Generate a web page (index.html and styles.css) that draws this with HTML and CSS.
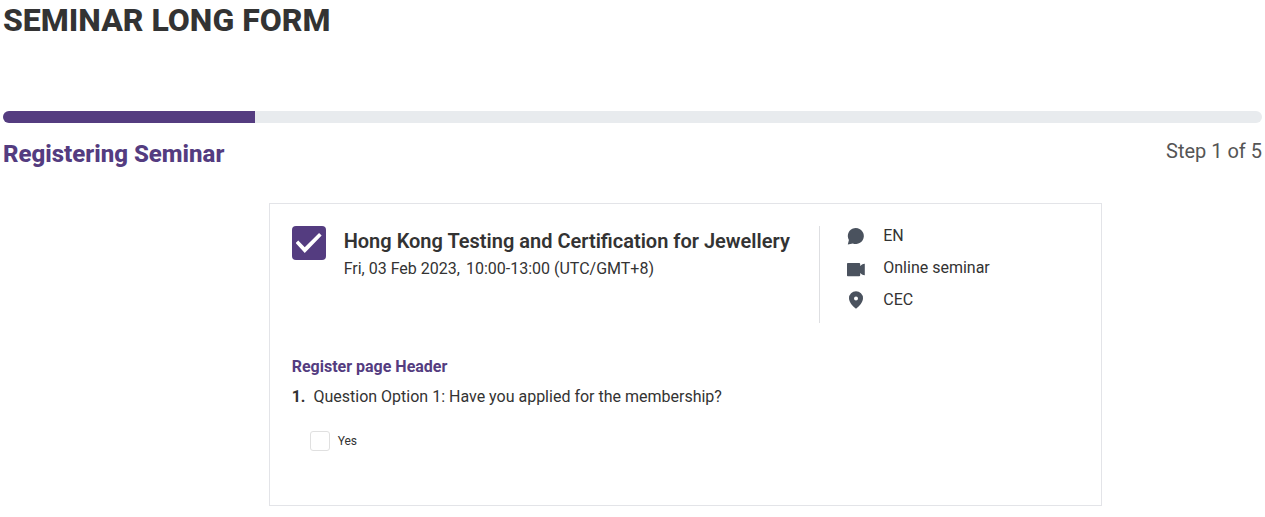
FILE: index.html
```html
<!DOCTYPE html>
<html lang="en">
<head>
<meta charset="utf-8">
<meta name="viewport" content="width=device-width, initial-scale=1">
<title>Seminar Long Form</title>
<link rel="stylesheet" href="styles.css">
</head>
<body>
<main class="page">
  <h1 class="title">SEMINAR LONG FORM</h1>
  <div class="progress" role="progressbar" aria-label="Registration progress" aria-valuemin="0" aria-valuemax="5" aria-valuenow="1">
    <div class="progress-bar" style="width: 20%"></div>
  </div>
  <div class="step-row">
    <h2 class="step-name">Registering Seminar</h2>
    <p class="step-count">Step 1 of 5</p>
  </div>
  <form class="card">
    <div class="seminar">
      <input class="check check-large" type="checkbox" id="seminar" checked>
      <div class="seminar-info">
        <label class="seminar-name" for="seminar">Hong Kong Testing and Certification for Jewellery</label>
        <p class="seminar-time"><span>Fri, 03 Feb 2023,</span><span>10:00-13:00 (UTC/GMT+8)</span></p>
      </div>
      <ul class="details">
        <li class="detail">
          <svg class="icon" viewBox="0 0 18 18" aria-hidden="true"><path d="M.8 17.500 1.900 13A8 8 0 1 1 5.800 16.400Z"/></svg>
          <span>EN</span>
        </li>
        <li class="detail">
          <svg class="icon" viewBox="0 0 18 18" aria-hidden="true"><path d="M.8 4H12.200Q13.200 4 13.200 5V7L15 5.500Q16 4.800 17.800 4.800V16.200Q16 16.200 15 15.500L13.200 14V16.300Q13.200 17.300 12.200 17.300H.8Q0 17.300 0 16.500V4.800Q0 4 .8 4Z"/></svg>
          <span>Online seminar</span>
        </li>
        <li class="detail">
          <svg class="icon" viewBox="0 0 18 18" aria-hidden="true"><path fill-rule="evenodd" d="M9 .3A7 7 0 0 0 2 7.300C2 11.500 6 15.500 9 17.700C12 15.500 16 11.500 16 7.300A7 7 0 0 0 9 .3ZM9 5.500A2 2 0 1 1 9 9.500A2 2 0 0 1 9 5.500Z"/></svg>
          <span>CEC</span>
        </li>
      </ul>
    </div>
    <h3 class="section-title">Register page Header</h3>
    <fieldset class="question">
      <legend class="question-text"><b>1.</b><span>Question Option 1: Have you applied for the membership?</span></legend>
      <label class="option"><input class="check" type="checkbox" name="membership"><span>Yes</span></label>
    </fieldset>
  </form>
</main>
</body>
</html>
```

FILE: styles.css
```css
* {
  box-sizing: border-box;
}

body {
  margin: 0;
  background: #fff;
  color: #333;
  font: 16px/24px Roboto, "Liberation Sans", sans-serif;
}

h1, h2, h3, p, ul, fieldset {
  margin: 0;
  padding: 0;
}

.page {
  padding: 0 3px 11px;
}

.title {
  font-size: 32px;
  line-height: 40px;
  font-weight: 800;
}

.progress {
  height: 12px;
  margin-top: 71px;
  overflow: hidden;
  border-radius: 6px;
  background: #e8ebee;
}

.progress-bar {
  height: 100%;
  background: #543c80;
}

.step-row {
  display: flex;
  justify-content: space-between;
  margin-top: 12px;
}

.step-name {
  color: #543c80;
  font-size: 24px;
  line-height: 38px;
  font-weight: 800;
}

.step-count {
  color: #555;
  font-size: 20px;
  line-height: 32px;
}

.card {
  margin: 30px 12.7% 0 21.1%;
  padding: 22px 22px 52px;
  border: 1px solid #e3e4e8;
}

.seminar {
  display: flex;
  align-items: flex-start;
}

.check {
  appearance: none;
  flex: none;
  width: 20px;
  height: 20px;
  margin: 0;
  border: 1px solid #e0e0e0;
  border-radius: 3px;
  background: #fff;
}

.check-large {
  width: 34px;
  height: 34px;
  border: 0;
  border-radius: 4px;
}

.check:checked {
  display: grid;
  place-items: center;
  background: #543c80;
}

.check:checked::before {
  content: "";
  width: 26px;
  height: 20px;
  background: #fff;
  clip-path: polygon(0 50%, 10% 38%, 35% 71%, 90% 0, 100% 12%, 35% 100%);
}

.seminar-info {
  flex: 1;
  padding-left: 18px;
}

.seminar-name {
  display: block;
  font-size: 20px;
  line-height: 30px;
  font-weight: 600;
}

.seminar-time {
  display: flex;
  gap: 6px;
  line-height: 26px;
}

.details {
  display: grid;
  gap: 12px;
  width: 33%;
  padding: 0 0 13px 27px;
  border-left: 1px solid #dedfe2;
  list-style: none;
}

.detail {
  display: flex;
  align-items: center;
  gap: 18px;
  line-height: 20px;
}

.icon {
  flex: none;
  width: 18px;
  height: 18px;
  fill: #4a525e;
}

.section-title {
  margin-top: 32px;
  color: #543c80;
  font-size: 16px;
  line-height: 24px;
  font-weight: 700;
}

.question {
  margin-top: 6px;
  border: 0;
}

.question-text {
  display: flex;
  gap: 8px;
  padding: 0;
}

.option {
  display: flex;
  align-items: center;
  gap: 8px;
  width: fit-content;
  margin: 20px 0 0 18px;
  font-size: 12px;
}
```
